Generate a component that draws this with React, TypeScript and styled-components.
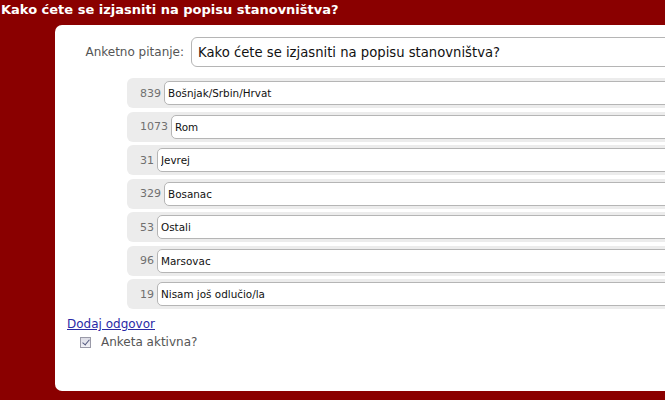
import React from "react";
import styled, { createGlobalStyle } from "styled-components";

const answers = [
  { votes: 839, text: "Bošnjak/Srbin/Hrvat" },
  { votes: 1073, text: "Rom" },
  { votes: 31, text: "Jevrej" },
  { votes: 329, text: "Bosanac" },
  { votes: 53, text: "Ostali" },
  { votes: 96, text: "Marsovac" },
  { votes: 19, text: "Nisam još odlučio/la" },
];

export default function App() {
  return (
    <>
      <Global />
      <Title>Kako ćete se izjasniti na popisu stanovništva?</Title>
      <Panel>
        <QuestionRow>
          <Label>Anketno pitanje:</Label>
          <QuestionInput defaultValue="Kako ćete se izjasniti na popisu stanovništva?" />
        </QuestionRow>
        <Answers>
          {answers.map((a) => (
            <AnswerRow key={a.text}>
              <Votes>{a.votes}</Votes>
              <AnswerInput defaultValue={a.text} />
            </AnswerRow>
          ))}
        </Answers>
        <AddLink href="#">Dodaj odgovor</AddLink>
        <ActiveRow>
          <Check type="checkbox" defaultChecked />
          <span>Anketa aktivna?</span>
        </ActiveRow>
      </Panel>
    </>
  );
}

const Global = createGlobalStyle`
  html, body { margin: 0; padding: 0; background: #8a0000; overflow: hidden; }
  body { font-family: "DejaVu Sans", Verdana, sans-serif; width: 665px; height: 400px; }
`;

const Title = styled.h1`
  margin: 0;
  padding: 2px 0 0 1px;
  height: 23px;
  box-sizing: border-box;
  font-size: 13px;
  font-weight: bold;
  color: #fff;
`;

const Panel = styled.div`
  margin: 2px 0 0 55px;
  width: 700px;
  height: 366px;
  box-sizing: border-box;
  background: #fff;
  border-radius: 7px;
  padding: 12px 0 0 12px;
`;

const QuestionRow = styled.div`
  display: flex;
  align-items: center;
  gap: 7px;
`;

const Label = styled.label`
  width: 117px;
  flex-shrink: 0;
  text-align: right;
  font-size: 12px;
  color: #555;
`;

const QuestionInput = styled.input`
  width: 600px;
  height: 30px;
  box-sizing: border-box;
  border: 1px solid #b5b5b5;
  border-radius: 6px;
  padding: 0 6px;
  font-family: inherit;
  font-size: 13.2px;
  color: #111;
`;

const Answers = styled.div`
  display: flex;
  flex-direction: column;
  gap: 3.5px;
  margin: 11px 0 0 60px;
`;

const AnswerRow = styled.div`
  display: flex;
  align-items: center;
  height: 30px;
  background: #ececec;
  border-radius: 6px 0 0 6px;
  padding-left: 13px;
`;

const Votes = styled.span`
  font-size: 11px;
  color: #707070;
  margin-right: 3px;
`;

const AnswerInput = styled.input`
  flex: 1;
  height: 24px;
  box-sizing: border-box;
  border: 1px solid #b5b5b5;
  border-radius: 5px;
  padding: 0 3px;
  font-family: inherit;
  font-size: 10.4px;
  color: #111;
`;

const AddLink = styled.a`
  display: block;
  margin-top: 8px;
  font-size: 12px;
  color: #2a2aa6;
  width: max-content;
`;

const ActiveRow = styled.label`
  display: flex;
  align-items: center;
  gap: 10px;
  margin: 4px 0 0 13px;
  font-size: 12px;
  color: #555;
`;

const Check = styled.input`
  appearance: none;
  position: relative;
  margin: 0;
  width: 11px;
  height: 11px;
  box-sizing: border-box;
  border: 1px solid #9a9aa8;
  background: linear-gradient(#dcdce6, #f2f2f6);
  &::after {
    content: "";
    position: absolute;
    left: 3px;
    top: 0px;
    width: 3px;
    height: 6px;
    border: solid #555b80;
    border-width: 0 1.5px 1.5px 0;
    transform: rotate(40deg);
  }
`;
